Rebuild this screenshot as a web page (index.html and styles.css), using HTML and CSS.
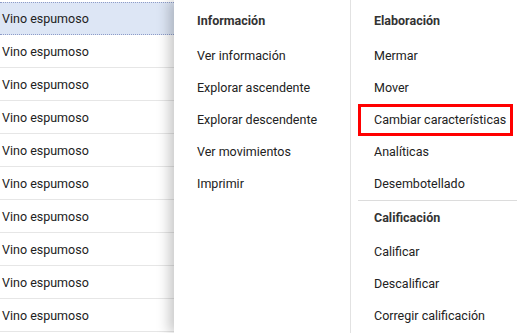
FILE: index.html
```html
<!DOCTYPE html>
<html lang="es">
<head>
    <meta charset="UTF-8">
    <title>Menú de acciones</title>
    <link rel="stylesheet" href="styles.css">
</head>
<body>
    <div class="page">
        <div class="list">
            <div class="row selected">Vino espumoso</div>
            <div class="row">Vino espumoso</div>
            <div class="row">Vino espumoso</div>
            <div class="row">Vino espumoso</div>
            <div class="row">Vino espumoso</div>
            <div class="row">Vino espumoso</div>
            <div class="row">Vino espumoso</div>
            <div class="row">Vino espumoso</div>
            <div class="row">Vino espumoso</div>
            <div class="row">Vino espumoso</div>
        </div>

        <div class="menu">
            <div class="menu-col">
                <div class="menu-title">Información</div>
                <div class="menu-item">Ver información</div>
                <div class="menu-item">Explorar ascendente</div>
                <div class="menu-item">Explorar descendente</div>
                <div class="menu-item">Ver movimientos</div>
                <div class="menu-item">Imprimir</div>
            </div>
            <div class="menu-col">
                <div class="menu-title">Elaboración</div>
                <div class="menu-item">Mermar</div>
                <div class="menu-item">Mover</div>
                <div class="menu-item marked">Cambiar características</div>
                <div class="menu-item">Analíticas</div>
                <div class="menu-item">Desembotellado</div>
                <div class="divider"></div>
                <div class="menu-title">Calificación</div>
                <div class="menu-item">Calificar</div>
                <div class="menu-item">Descalificar</div>
                <div class="menu-item">Corregir calificación</div>
            </div>
        </div>
    </div>
</body>
</html>
```

FILE: styles.css
```css
* {
    margin: 0;
    padding: 0;
    box-sizing: border-box;
}

body {
    font-family: Roboto, 'Liberation Sans', sans-serif;
    font-size: 12.5px;
    color: #222;
    background: #fff;
    overflow: hidden;
}

.page {
    display: flex;
    height: 333px;
}

.list {
    width: 174px;
    flex-shrink: 0;
    padding-top: 2px;
}

.row {
    height: 33px;
    line-height: 32px;
    padding: 1px 0 0 2px;
    border-bottom: 1px solid #e6e6e6;
    white-space: nowrap;
}

.row.selected {
    background: #dde6f5;
    border-top: 1px dotted #8e9cc8;
    border-bottom: 1px dotted #8e9cc8;
    padding-top: 0;
    line-height: 31px;
}

.menu {
    flex: 1;
    display: flex;
    background: #fff;
    box-shadow: -5px 0 12px rgba(0, 0, 0, 0.22);
    position: relative;
}

.menu-col {
    padding-top: 5px;
}

.menu-col:first-child {
    width: 177px;
    border-right: 1px solid #e2e2e2;
}

.menu-col:last-child {
    flex: 1;
}

.menu-title {
    height: 32px;
    line-height: 32px;
    padding-left: 23px;
    font-weight: 700;
    color: #333;
    margin-bottom: 3px;
}

.menu-item {
    height: 32px;
    line-height: 32px;
    padding-left: 23px;
    white-space: nowrap;
    color: #222;
}

.menu-item.marked {
    margin: 0 4px 0 7px;
    padding-left: 13px;
    border: 3px solid #f00;
    line-height: 26px;
}

.divider {
    height: 1px;
    margin-left: 7px;
    background: #dcdcdc;
}

.divider + .menu-title {
    height: 33px;
    line-height: 34px;
    margin-bottom: 2px;
}
```
